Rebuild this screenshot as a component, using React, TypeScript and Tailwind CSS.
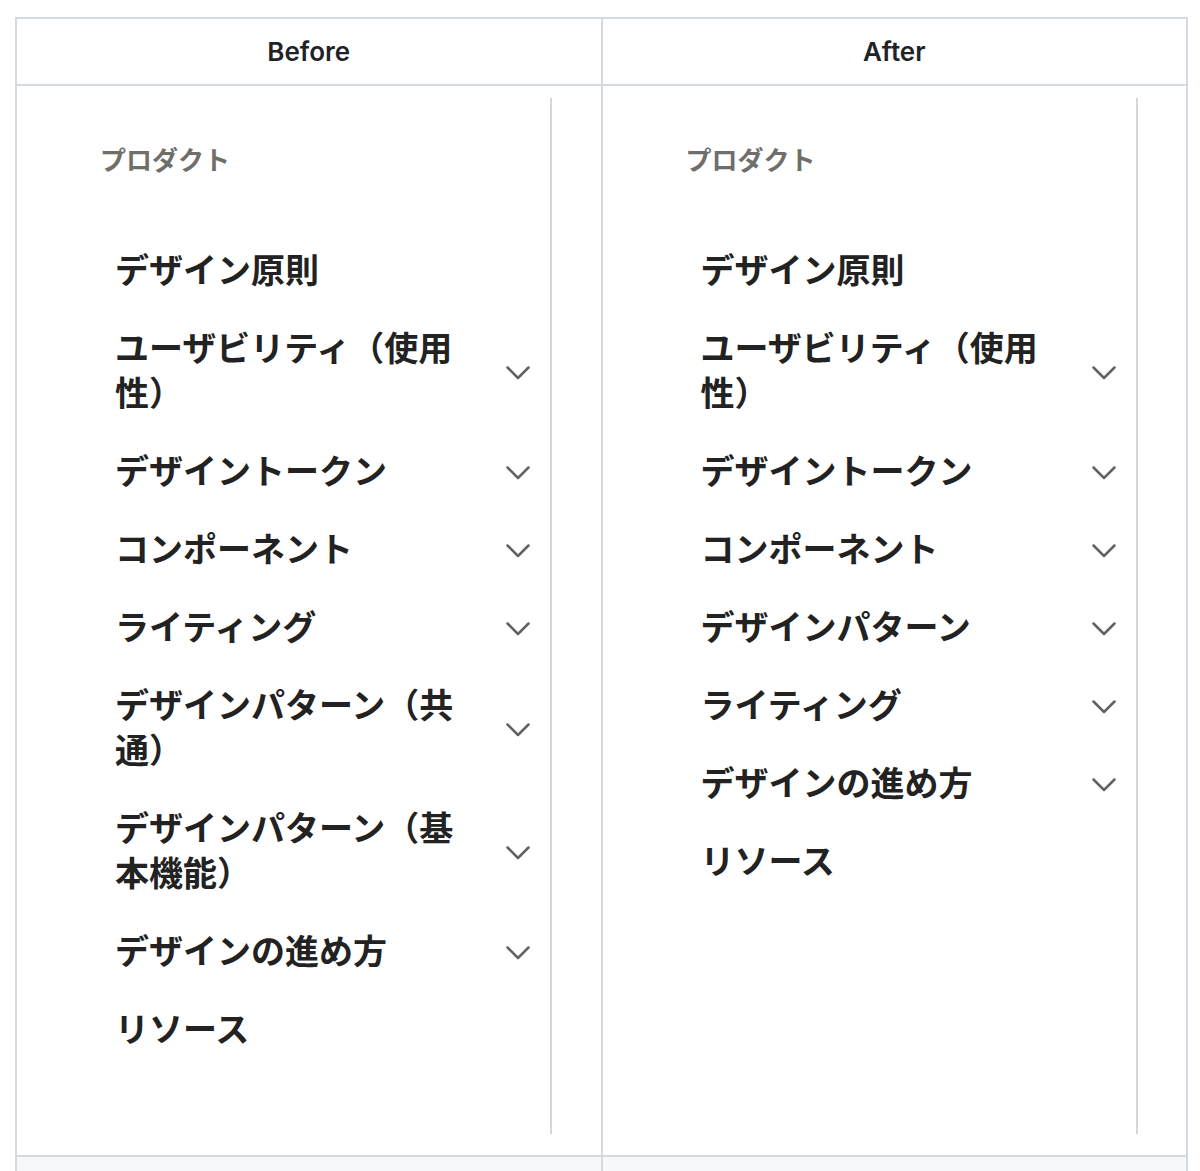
import React from "react";

const Chevron = () => (
  <svg width="24" height="14" viewBox="0 0 24 14" fill="none" className="shrink-0">
    <polyline points="1.5,1.5 12,12 22.5,1.5" stroke="#626262" strokeWidth="2.5" strokeLinecap="round" strokeLinejoin="round" />
  </svg>
);

type Item = { label: string; chevron: boolean };

const before: Item[] = [
  { label: "デザイン原則", chevron: false },
  { label: "ユーザビリティ（使用性）", chevron: true },
  { label: "デザイントークン", chevron: true },
  { label: "コンポーネント", chevron: true },
  { label: "ライティング", chevron: true },
  { label: "デザインパターン（共通）", chevron: true },
  { label: "デザインパターン（基本機能）", chevron: true },
  { label: "デザインの進め方", chevron: true },
  { label: "リソース", chevron: false },
];

const after: Item[] = [
  { label: "デザイン原則", chevron: false },
  { label: "ユーザビリティ（使用性）", chevron: true },
  { label: "デザイントークン", chevron: true },
  { label: "コンポーネント", chevron: true },
  { label: "デザインパターン", chevron: true },
  { label: "ライティング", chevron: true },
  { label: "デザインの進め方", chevron: true },
  { label: "リソース", chevron: false },
];

const Sidebar = ({ items }: { items: Item[] }) => (
  <div
    className="w-[510px] h-[1036px] border-r-2 border-[#d6d6d6]"
    style={{ fontFamily: '"Noto Sans CJK JP", "Noto Sans", sans-serif' }}
  >
    <div className="pt-[43px] pl-[58px] text-[26px] leading-[36px] font-bold text-[#6e6e6b]">
      プロダクト
    </div>
    <ul className="mt-[52px]">
      {items.map((it) => (
        <li key={it.label} className="flex items-center pl-[73px] pr-[20px] py-[16.5px]">
          <span className="flex-1 text-[34px] leading-[45px] font-bold text-[#222222] pr-[30px]">
            {it.label}
          </span>
          <span className="w-[24px] flex justify-center pt-[8px]">{it.chevron ? <Chevron /> : null}</span>
        </li>
      ))}
    </ul>
  </div>
);

export default function App() {
  return (
    <div className="w-[1200px] h-[1171px] bg-white overflow-hidden pt-[17px] pl-[15px]">
      <div
        className="w-[1173px] grid grid-cols-2 border-l-2 border-t-2 border-[#d3dae2]"
        style={{ fontFamily: 'Inter, Roboto, "Liberation Sans", sans-serif' }}
      >
        <div className="h-[67px] flex items-center justify-center border-r-2 border-b-2 border-[#d3dae2] text-[26px] font-semibold text-[#1f2328]">
          Before
        </div>
        <div className="h-[67px] flex items-center justify-center border-r-2 border-b-2 border-[#d3dae2] text-[26px] font-semibold text-[#1f2328]">
          After
        </div>
        <div className="pt-[12px] pb-[21px] pl-[25px] border-r-2 border-b-2 border-[#d3dae2]">
          <Sidebar items={before} />
        </div>
        <div className="pt-[12px] pb-[21px] pl-[25px] border-r-2 border-b-2 border-[#d3dae2]">
          <Sidebar items={after} />
        </div>
        <div className="h-[40px] bg-[#f6f8fa] border-r-2 border-[#d3dae2]" />
        <div className="h-[40px] bg-[#f6f8fa] border-r-2 border-[#d3dae2]" />
      </div>
    </div>
  );
}
